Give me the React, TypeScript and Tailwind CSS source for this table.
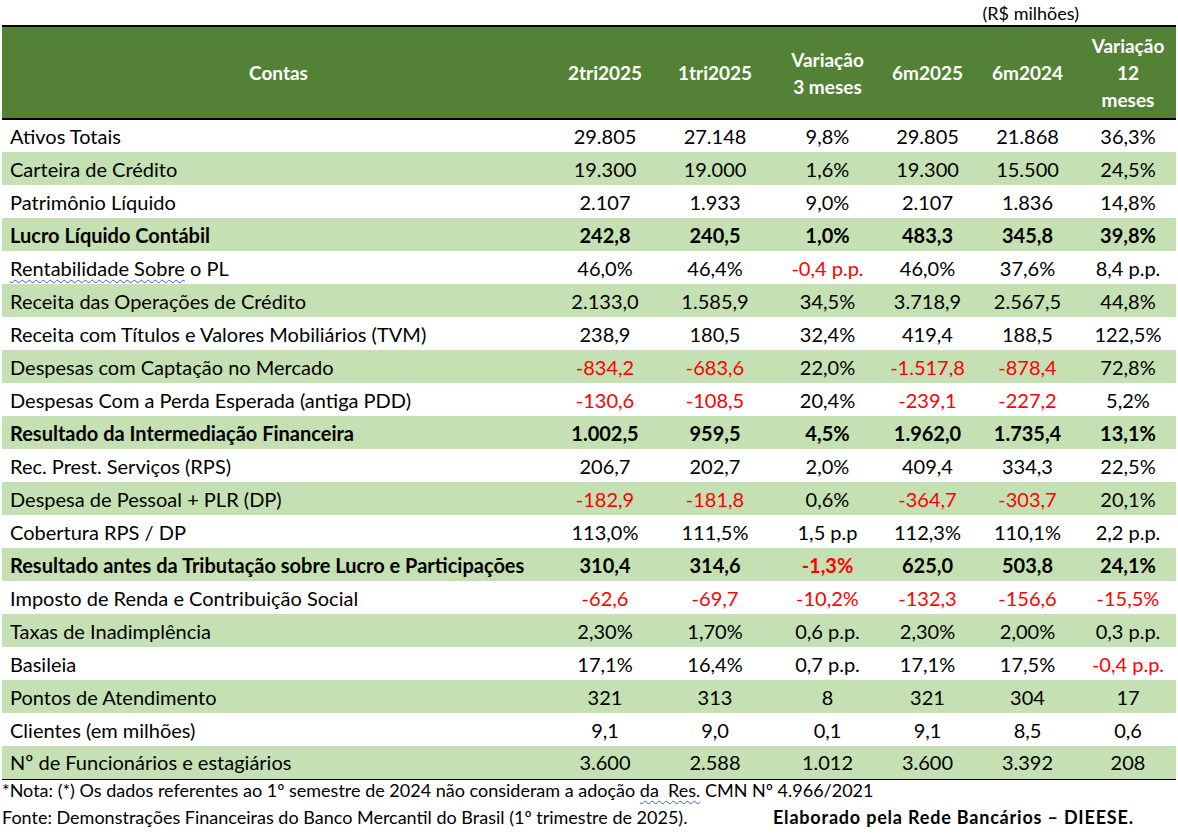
import React from "react"

type Row = { label: string; values: string[]; bold?: boolean; spell?: boolean }

const rows: Row[] = [
  { label: "Ativos Totais", values: ["29.805", "27.148", "9,8%", "29.805", "21.868", "36,3%"] },
  { label: "Carteira de Crédito", values: ["19.300", "19.000", "1,6%", "19.300", "15.500", "24,5%"] },
  { label: "Patrimônio Líquido", values: ["2.107", "1.933", "9,0%", "2.107", "1.836", "14,8%"] },
  { label: "Lucro Líquido Contábil", values: ["242,8", "240,5", "1,0%", "483,3", "345,8", "39,8%"], bold: true },
  { label: "Rentabilidade Sobre o PL", values: ["46,0%", "46,4%", "-0,4 p.p.", "46,0%", "37,6%", "8,4 p.p."], spell: true },
  { label: "Receita das Operações de Crédito", values: ["2.133,0", "1.585,9", "34,5%", "3.718,9", "2.567,5", "44,8%"] },
  { label: "Receita com Títulos e Valores Mobiliários (TVM)", values: ["238,9", "180,5", "32,4%", "419,4", "188,5", "122,5%"] },
  { label: "Despesas com Captação no Mercado", values: ["-834,2", "-683,6", "22,0%", "-1.517,8", "-878,4", "72,8%"] },
  { label: "Despesas Com a Perda Esperada (antiga PDD)", values: ["-130,6", "-108,5", "20,4%", "-239,1", "-227,2", "5,2%"] },
  { label: "Resultado da Intermediação Financeira", values: ["1.002,5", "959,5", "4,5%", "1.962,0", "1.735,4", "13,1%"], bold: true },
  { label: "Rec. Prest. Serviços (RPS)", values: ["206,7", "202,7", "2,0%", "409,4", "334,3", "22,5%"] },
  { label: "Despesa de Pessoal + PLR (DP)", values: ["-182,9", "-181,8", "0,6%", "-364,7", "-303,7", "20,1%"] },
  { label: "Cobertura RPS / DP", values: ["113,0%", "111,5%", "1,5 p.p", "112,3%", "110,1%", "2,2 p.p."] },
  { label: "Resultado antes da Tributação sobre Lucro e Participações", values: ["310,4", "314,6", "-1,3%", "625,0", "503,8", "24,1%"], bold: true },
  { label: "Imposto de Renda e Contribuição Social", values: ["-62,6", "-69,7", "-10,2%", "-132,3", "-156,6", "-15,5%"] },
  { label: "Taxas de Inadimplência", values: ["2,30%", "1,70%", "0,6 p.p.", "2,30%", "2,00%", "0,3 p.p."] },
  { label: "Basileia", values: ["17,1%", "16,4%", "0,7 p.p.", "17,1%", "17,5%", "-0,4 p.p."] },
  { label: "Pontos de Atendimento", values: ["321", "313", "8", "321", "304", "17"] },
  { label: "Clientes (em milhões)", values: ["9,1", "9,0", "0,1", "9,1", "8,5", "0,6"] },
  { label: "Nº de Funcionários e estagiários", values: ["3.600", "2.588", "1.012", "3.600", "3.392", "208"] },
]

// wavy blue underline, like Word's spell check marks
const spellMark = "underline decoration-wavy decoration-[#3b5bdb] decoration-1 underline-offset-[3px]"

export default function App() {
  return (
    <div className="h-[839px] w-[1178px] bg-white pl-[2px] text-black" style={{ fontFamily: "Lato, 'Open Sans', sans-serif" }}>
      <div className="flex h-[25px] items-end justify-end pb-[3px] pr-[99px] text-[18px] leading-none">(R$ milhões)</div>

      <table className="w-[1174px] table-fixed border-collapse">
        <colgroup>
          <col className="w-[553px]" />
          <col className="w-[100px]" />
          <col className="w-[120px]" />
          <col className="w-[105px]" />
          <col className="w-[95px]" />
          <col className="w-[105px]" />
          <col className="w-[96px]" />
        </colgroup>
        <thead>
          <tr className="h-[93px] border-y-2 border-black bg-[#538135] text-[19px] font-bold leading-[27px] text-white">
            <th className="text-center">Contas</th>
            <th>2tri2025</th>
            <th>1tri2025</th>
            <th>Variação<br />3 meses</th>
            <th>6m2025</th>
            <th>6m2024</th>
            <th>Variação<br />12<br />meses</th>
          </tr>
        </thead>
        <tbody className="text-[20px] leading-none">
          {rows.map((r, i) => (
            <tr key={r.label} className={`h-[33px] ${i % 2 === 1 ? "bg-[#c5e0b3]" : "bg-white"} ${r.bold ? "font-bold" : ""} ${i === rows.length - 1 ? "border-b border-black" : ""}`}>
              <td className="pl-2 whitespace-nowrap">
                {r.spell ? (
                  <>
                    <span className={spellMark}>Rentabilidade Sobre</span> o PL
                  </>
                ) : (
                  r.label
                )}
              </td>
              {r.values.map((v, j) => (
                <td key={j} className={`text-center whitespace-nowrap ${v.startsWith("-") ? "text-[#ff0000]" : ""}`}>
                  {v}
                </td>
              ))}
            </tr>
          ))}
        </tbody>
      </table>

      <div className="-mt-[3px] text-[18px] leading-[27px]">
        <p>
          *Nota: (*) Os dados referentes ao 1º semestre de 2024 não consideram a adoção{" "}
          <span className={spellMark}>da&nbsp; Res.</span> CMN Nº 4.966/2021
        </p>
        <div className="flex">
          <p className="w-[771px]">Fonte: Demonstrações Financeiras do Banco Mercantil do Brasil (1º trimestre de 2025).</p>
          <p className="font-bold tracking-[0.8px]">Elaborado pela Rede Bancários – DIEESE.</p>
        </div>
      </div>
    </div>
  )
}
